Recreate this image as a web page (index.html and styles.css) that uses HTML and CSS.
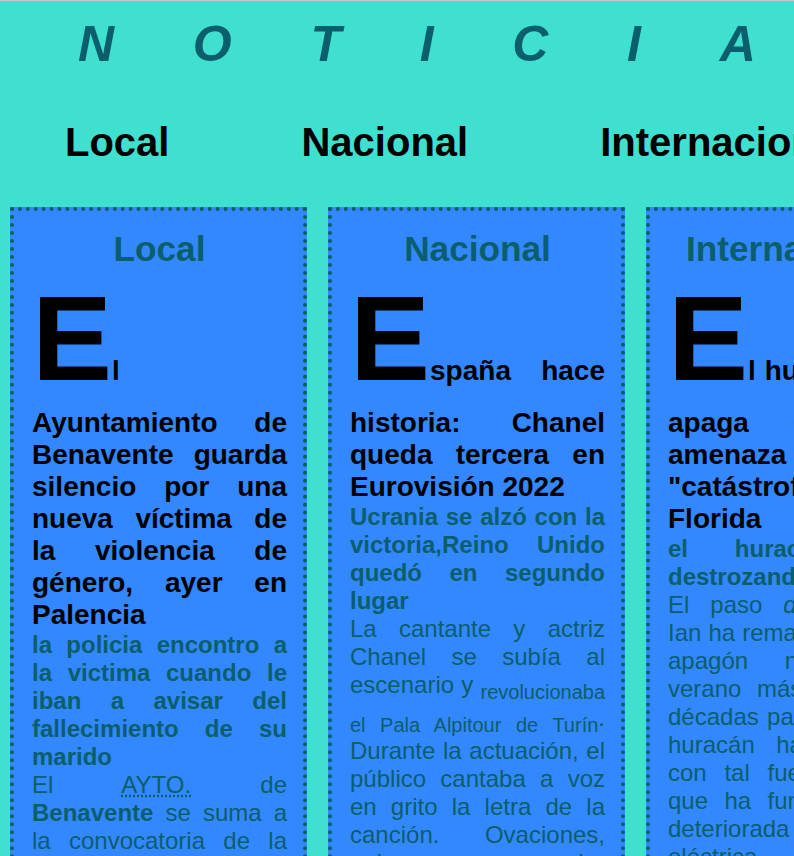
FILE: index.html
```html
<!DOCTYPE html>
<html lang="es">
<head>
<meta charset="utf-8">
<title>Noticias</title>
<link rel="stylesheet" href="styles.css">
</head>
<body>
<header class="masthead">
  <h1 class="title">NOTICIAS</h1>
  <nav class="menu">
    <a class="menu-link" href="#local">Local</a>
    <a class="menu-link" href="#nacional">Nacional</a>
    <a class="menu-link" href="#internacional">Internacional</a>
  </nav>
</header>
<main class="columns">
  <article class="card" id="local">
    <h2 class="card-title">Local</h2>
    <p class="headline">El Ayuntamiento de Benavente guarda silencio por una nueva víctima de la violencia de género, ayer en Palencia</p>
    <p class="subhead">la policia encontro a la victima cuando le iban a avisar del fallecimiento de su marido</p>
    <p class="body-text">El <abbr title="Ayuntamiento">AYTO.</abbr> de <b>Benavente</b> se suma a la convocatoria de la concentración de repulsa por el asesinato de la mujer, que tendrá lugar mañana a las doce frente a la casa consistorial.</p>
  </article>
  <article class="card" id="nacional">
    <h2 class="card-title">Nacional</h2>
    <p class="headline">España hace historia: Chanel queda tercera en Eurovisión 2022</p>
    <p class="subhead">Ucrania se alzó con la victoria,Reino Unido quedó en segundo lugar</p>
    <p class="body-text">La cantante y actriz Chanel se subía al escenario y <sub>revolucionaba el Pala Alpitour de Turín</sub>. Durante la actuación, el público cantaba a voz en grito la letra de la canción. Ovaciones, aplausos y una noche histórica para la delegación española.</p>
  </article>
  <article class="card" id="internacional">
    <h2 class="card-title">Internacional</h2>
    <p class="headline">El huracán Ian apaga Cuba y amenaza con una "catástrofe" a Florida</p>
    <p class="subhead">el huracán está destrozando Cuba</p>
    <p class="body-text">El paso <em>del huracán</em> Ian&nbsp;ha rematado con un apagón nacional y verano más cálido en décadas para la isla. El huracán ha golpeado con tal fuerza la red que ha fundido la ya deteriorada red eléctrica del país caribeño.</p>
  </article>
</main>
</body>
</html>
```
FILE: styles.css
```css
html {
  overflow: hidden;
  border-top: 1px solid #c8c8c8;
}

body {
  margin: 0;
  background: #40e0d0;
  font-family: "Liberation Sans", Arial, sans-serif;
  overflow: hidden;
}

.masthead {
  padding-top: 14px;
}

.title {
  margin: 0;
  padding-left: 78px;
  font-size: 50px;
  font-weight: bold;
  font-style: italic;
  letter-spacing: 78.7px;
  color: #0b5e6b;
  white-space: nowrap;
}

.menu {
  display: flex;
  gap: 132px;
  margin-top: 47px;
  padding-left: 65px;
  white-space: nowrap;
}

.menu-link {
  font-size: 40px;
  font-weight: bold;
  color: #000;
  text-decoration: none;
}

.columns {
  display: flex;
  gap: 21px;
  margin-top: 42px;
  padding-left: 10px;
}

.card {
  flex: 0 0 297px;
  box-sizing: border-box;
  border: 4px dotted #0b5e6b;
  background: #3388ff;
  padding: 18px 16px 40px 18px;
}

.card-title {
  margin: 0;
  font-size: 35.2px;
  font-weight: bold;
  text-align: center;
  color: #0b5e6b;
  white-space: nowrap;
}

.headline {
  margin: 0;
  font-size: 28px;
  font-weight: bold;
  color: #000;
  text-align: justify;
}

.headline::first-letter {
  font-size: 120px;
}

.subhead {
  margin: 0;
  font-size: 24px;
  font-weight: bold;
  color: #0b5e6b;
  text-align: justify;
}

.body-text {
  margin: 0;
  font-size: 24px;
  color: #0b5e6b;
  text-align: justify;
}
```
